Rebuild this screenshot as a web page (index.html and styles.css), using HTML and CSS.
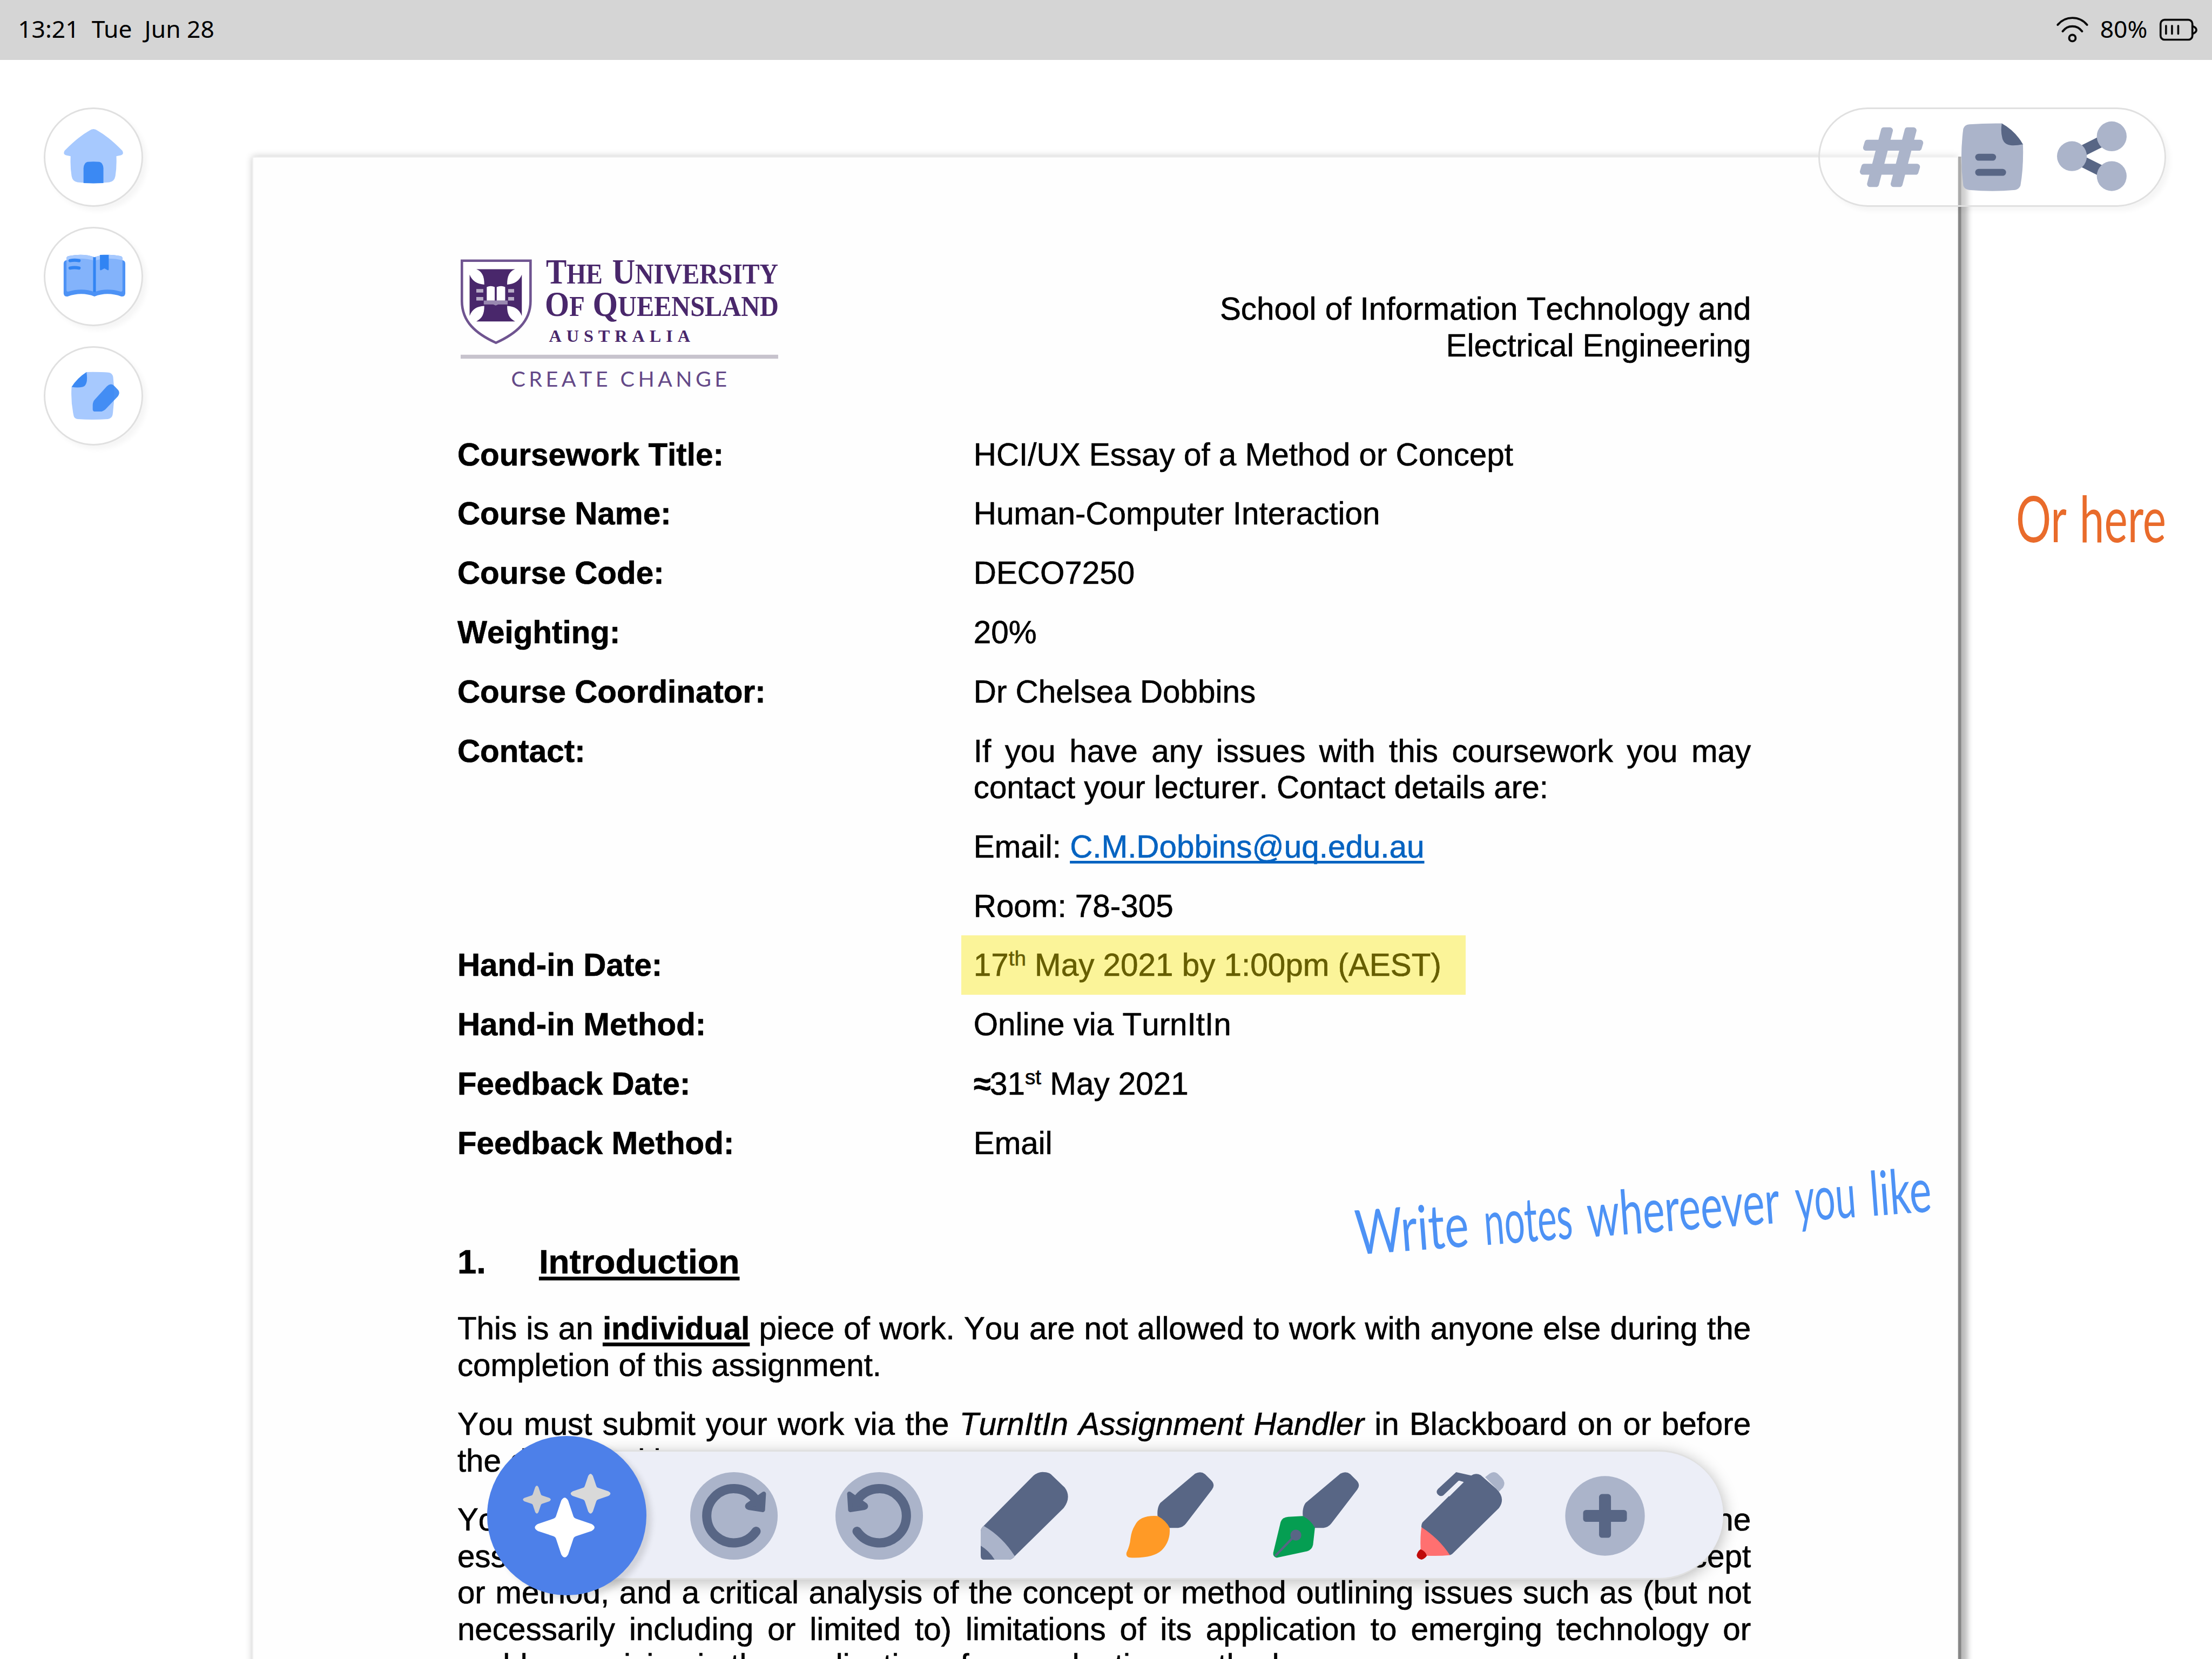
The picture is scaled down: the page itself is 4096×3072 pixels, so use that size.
FILE: index.html
```html
<!DOCTYPE html>
<html lang="en">
<head>
<meta charset="utf-8">
<title>Coursework reader</title>
<link rel="stylesheet" href="styles.css">
</head>
<body>
<header class="status">
  <span class="status-text">13:21&nbsp; Tue&nbsp; Jun 28</span>
  <div class="status-right">
    <svg class="wifi" viewBox="4136 32 64 56" fill="none" stroke="#0a0a0a" stroke-width="4.2" stroke-linecap="round"><path d="M4138.500 50.500Q4150 36.500 4168 36.500T4197.500 50.500M4148.500 63.500Q4156 53.500 4168 53.500T4187.500 63.500"/><circle cx="4168" cy="77" r="6.500"/></svg>
    <span class="status-text">80%</span>
    <svg class="battery" viewBox="4342 36 78 48" fill="none" stroke="#0a0a0a" stroke-width="4" stroke-linecap="round"><rect x="4345" y="40" width="64" height="40" rx="8"/><path d="M4356 52v16M4368 52v16M4380.500 52v16M4410 53Q4417 56 4417 60.500T4410 68"/></svg>
  </div>
</header>
<main class="stage">
  <article class="sheet">
    <div class="masthead">
      <svg class="crest" viewBox="919 510 660 280">
        <g fill="#49276b">
          <path d="M928 525H1066V606C1066 648 1036 672 996.500 690C957 672 928 648 928 606Z" fill="#fff" stroke="#6f5490" stroke-width="5"/>
          <path d="M957 542H1035C1022 547 1019 558 1019 573C1034 572 1043 566 1048.500 553V636C1043 622 1034 617 1019 616C1019 632 1023 641 1035 647H957C969 641 973 632 973 616C958 617 949 622 943.500 636V553C949 566 958 572 973 573C973 558 970 547 957 542Z"/>
          <path d="M957 582h14v7h-14zM957 598h14v7h-14zM1021 582h12v7h-12zM1021 598h12v7h-12z" fill="#b9adc8"/>
          <path d="M972 605H1020V613H1001L996 615L991 613H972Z" fill="#9a89b0"/>
          <path d="M978 578Q986 574 994 578V605H978ZM998 578Q1007 574 1015 578V605H998Z" fill="#fff"/>
          <g class="serif">
            <text x="1097" y="571" font-size="72" textLength="114" lengthAdjust="spacingAndGlyphs">T<tspan font-size="58">HE</tspan></text>
            <text x="1230" y="571" font-size="72" textLength="334" lengthAdjust="spacingAndGlyphs">U<tspan font-size="58">NIVERSITY</tspan></text>
            <text x="1095" y="636.500" font-size="72" textLength="80" lengthAdjust="spacingAndGlyphs">O<tspan font-size="58">F</tspan></text>
            <text x="1191" y="636.500" font-size="72" textLength="374" lengthAdjust="spacingAndGlyphs">Q<tspan font-size="58">UEENSLAND</tspan></text>
            <text x="1103" y="688" font-size="35" textLength="284">AUSTRALIA</text>
          </g>
          <rect x="925.500" y="714" width="638.500" height="8" fill="#c7c3cd"/>
          <text class="motto" x="1027" y="778" font-size="43" textLength="434">CREATE CHANGE</text>
        </g>
      </svg>
      <p class="school">School of Information Technology and<br>Electrical Engineering</p>
    </div>
    <dl class="facts">
      <dt>Coursework Title:</dt><dd>HCI/UX Essay of a Method or Concept</dd>
      <dt>Course Name:</dt><dd>Human-Computer Interaction</dd>
      <dt>Course Code:</dt><dd>DECO7250</dd>
      <dt>Weighting:</dt><dd>20%</dd>
      <dt>Course Coordinator:</dt><dd>Dr Chelsea Dobbins</dd>
      <dt>Contact:</dt>
      <dd class="stack">
        <p><span class="line">If you have any issues with this coursework you may</span><span class="line end">contact your lecturer. Contact details are:</span></p>
        <p>Email: <a class="mail">C.M.Dobbins@uq.edu.au</a></p>
        <p>Room: 78-305</p>
      </dd>
      <dt>Hand-in Date:</dt><dd class="marked">17<sup>th</sup> May 2021 by 1:00pm (AEST)</dd>
      <dt>Hand-in Method:</dt><dd>Online via TurnItIn</dd>
      <dt>Feedback Date:</dt><dd><span class="approx">≈</span>31<sup>st</sup> May 2021</dd>
      <dt>Feedback Method:</dt><dd>Email</dd>
    </dl>
    <h2 class="heading"><span>1.</span><u>Introduction</u></h2>
    <div class="prose">
      <p><span class="line">This is an <b><u>individual</u></b> piece of work. You are not allowed to work with anyone else during the</span><span class="line end">completion of this assignment.</span></p>
      <p><span class="line">You must submit your work via the <i>TurnItIn Assignment Handler</i> in Blackboard on or before</span><span class="line end">the deadline itinerary.</span></p>
      <p><span class="line">You are required to select a method or concept from the course and write about it in the</span><span class="line">essay. The essay should contain a summary of the background of the chosen concept</span><span class="line">or method, and a critical analysis of the concept or method outlining issues such as (but not</span><span class="line">necessarily including or limited to) limitations of its application to emerging technology or</span><span class="line end">problems arising in the application of an evaluation method.</span></p>
    </div>
  </article>

  <svg class="ink ink-blue" viewBox="2700 2300 1220 260">
    <g transform="translate(2729 2523) rotate(-4.300)" font-size="124">
      <text x="0" textLength="228" lengthAdjust="spacingAndGlyphs">Write</text>
      <text x="259" textLength="178" lengthAdjust="spacingAndGlyphs">notes</text>
      <text x="467" textLength="388" lengthAdjust="spacingAndGlyphs">whereever</text>
      <text x="887" textLength="122" lengthAdjust="spacingAndGlyphs">you</text>
      <text x="1037" textLength="124" lengthAdjust="spacingAndGlyphs">like</text>
    </g>
  </svg>
  <svg class="ink ink-orange" viewBox="4040 960 340 160">
    <g font-size="128">
      <text x="4054" y="1090" textLength="102" lengthAdjust="spacingAndGlyphs">Or</text>
      <text x="4182" y="1090" textLength="174" lengthAdjust="spacingAndGlyphs">here</text>
    </g>
  </svg>

  <nav class="side">
    <a class="round"><svg viewBox="0 0 200 200"><path fill="#a7c9fe" d="M100 43.500Q104 43.500 109 47Q132 60 158 87Q162 94 155 96L146 98Q147 120 144 138Q142 149 132 150.500Q100 154 68 150.500Q58 149 56 138Q53 120 54 98L45 96Q38 94 42 87Q68 60 91 47Q96 43.500 100 43.500Z"/><path fill="#3b89f3" d="M80 152V122Q81 111 88 109.500Q100 108 112 109.500Q119 111 120 122V152Q100 153 80 152Z"/></svg></a>
    <a class="round"><svg viewBox="0 0 200 200"><path fill="#4d92f5" d="M40 74Q40 68 46 67V67Q76 60 102 68Q128 60 158 67Q164 68 164 74V134Q163 141 156 140Q128 130 102 140Q76 130 48 140Q41 141 40 134Z"/><path fill="#83b3fb" d="M45.700 63Q46 59 52 58.500Q80 53 102 61Q124 53 152 58.500Q158 59 158.300 63V127Q158 131 154 130Q126 122 102 131Q78 122 50 130Q46 131 45.700 127Z"/><path fill="#a7c9fe" d="M45.700 63Q46 59 52 58.500Q80 53 102 61Q124 53 152 58.500Q158 59 158.300 63V67Q128 60 102 68Q76 60 45.700 67Z"/><path fill="#3184f3" d="M99.300 61h5.500v70h-5.500zM113 56.500Q122 56 130.700 56.500V86Q130 88 128 87L122 83.500L116 87Q114 88 113 86Z"/><path fill="none" stroke="#3184f3" stroke-width="6.500" stroke-linecap="round" d="M53 68Q62 66 71 68M53 83Q62 81 71 83"/></svg></a>
    <a class="round"><svg viewBox="0 0 200 200"><path fill="#a7c9fe" d="M86 52Q112 51.500 130 53Q138 54 139.500 62Q144 98 138.500 138Q137 145.500 129 146.500Q98 149 68 146.500Q61 145.500 60 139Q54 110 56 82Z"/><path fill="#3b89f3" d="M86 52Q90 79 78 82Q68 84 56 82Q67 64 86 52Z"/><path fill="#3b89f3" fill-opacity=".93" d="M127 80.500Q135 73 142 80L150 88.500Q154 94 149 101L124 127Q119 131.500 114 131.500H103Q98.500 131.500 98.500 127V118Q99 111 103 107Z"/></svg></a>
  </nav>

  <div class="pill">
    <svg viewBox="0 0 700 200">
      <g fill="#abb4ca" stroke="#abb4ca" stroke-width="12" stroke-linejoin="round"><path d="M132 46h12l-28 108h-12zM179.500 46h12l-28 108h-12zM99 71h106l-3 10h-106zM92.500 119.300h106l-3 10h-106z"/></g>
      <path fill="#abb4ca" d="M303.500 34Q335 31.500 369 32L411.500 74Q413 120 406.500 157Q404 164 396 166Q350 170 303 166Q293 164 291.500 157Q284 100 291.500 43Q294 35 303.500 34Z"/>
      <path fill="#586685" d="M369 32Q396 47 411.500 74Q397 77 387 76Q375 75 371 65Q366 50 369 32Z"/>
      <rect fill="#586685" x="315.500" y="93" width="42" height="14" rx="7"/><rect fill="#586685" x="315.500" y="123.500" width="62" height="14" rx="7"/>
      <path stroke="#586685" stroke-width="22" fill="none" d="M590 58L510 98L590 138"/>
      <g fill="#abb4ca"><circle cx="510" cy="98" r="30"/><circle cx="590" cy="58" r="30"/><circle cx="590" cy="138" r="30"/></g>
    </svg>
  </div>

  <div class="tools">
    <div class="magic"><svg viewBox="0 0 320 320"><defs><path id="star" d="M-7-54Q0-66 7-54L17-24Q18-19 23-17.500L54-7Q66 0 54 7L23 17.500Q18 19 17 24L7 54Q0 66-7 54L-17 24Q-18 19-23 17.500L-54 7Q-66 0-54-7L-23-17.500Q-18-19-17-24Z"/></defs><use href="#star" fill="#cfcfcf" transform="translate(100 128) scale(.467)"/><use href="#star" fill="#d9d9d9" transform="translate(208 116) scale(.667)"/><use href="#star" fill="#fff" transform="translate(156 184)"/></svg></div>
    <div class="tray">
      <svg class="tool" viewBox="0 0 176 176"><g id="turn"><circle cx="88" cy="88" r="88" fill="#abb4ca"/><path fill="none" stroke="#586685" stroke-width="18.500" stroke-linecap="round" d="M132.500 119A54.500 54.500 0 1 1 129 52"/><path fill="#586685" stroke="#586685" stroke-width="9" stroke-linejoin="round" d="M148 43.500L146 76L118 71.500Q113 70 116 66Z"/></g></svg>
      <svg class="tool" viewBox="0 0 176 176"><use href="#turn" transform="translate(176 0) scale(-1 1)"/></svg>
      <svg class="tool" viewBox="0 0 176 176"><path fill="#586685" d="M106 7Q117-2 128 0Q135 0 141 4L169 31Q183 50 167 72L68.500 169Q64 175.500 58 176H5Q0 175 0 168V118Q1 112 6 108Z"/><path fill="#abb4ca" d="M6 108Q44 130 68.500 169Q64 175.500 58 176H28Q17 158 0 148V118Q1 112 6 108Z"/></svg>
      <svg class="tool" viewBox="0 0 176 176"><path id="handle" fill="#586685" d="M139 3Q150-3 159 4L172 17Q180 26 173 35L121 103Q115 111 105 112H87.500L63.500 88Q62 72 69 62Z"/><path fill="#ff9a26" d="M63.700 88.300Q28 86 18 107Q11 118 9 134Q8 147 1 162Q-1 172 12 172Q55 173 72 157Q90 138 87.800 112Q80 97 63.700 88.300Z"/></svg>
      <svg class="tool" viewBox="0 0 176 176"><use href="#handle"/><path fill="#059e52" d="M63.700 88.300L34 90Q22 91 19 100L4 162Q3 170 11 172L72 159Q82 156 84 146L87.800 112Q80 97 63.700 88.300Z"/><circle cx="49.500" cy="126.700" r="11" fill="#586685"/><path stroke="#586685" stroke-width="4.500" d="M48 127L8 168.500"/></svg>
      <svg class="tool" viewBox="0 0 176 176"><path fill="#abb4ca" d="M138 10L147 3Q156-3 163 3L172 12Q180 21 174 31L166 39Z"/><path fill="#586685" d="M110 6.700Q119 1 129 6L160 33Q180 52 166 72L73.500 163Q71 166 67 167L10 111Q9 106 12 101L94 19.500L84.500 17.500L53.800 46.700Q48 50 43 45Q38 40 43 34L79.700 0Z"/><path fill="#eceef7" d="M86 17L95 20L66 49L61 42Z"/><path fill="#ff7070" d="M10 110.700Q46 134 67.200 167Q45 169 20.800 168L8.300 155Q7 130 10 110.700Z"/><path fill="#c00a0a" d="M8.300 155Q18 159 20.800 168Q17 174 10 176Q1 174 .300 167Q2 159 8.300 155Z"/></svg>
      <svg class="tool" viewBox="0 0 176 176"><circle cx="88" cy="88" r="80" fill="#abb4ca"/><path fill="none" stroke="#586685" stroke-width="12" stroke-linejoin="round" d="M82 50h12v76h-12zM50 82h76v12h-76z"/><path stroke="#586685" stroke-width="12" d="M88 50v76M50 88h76"/></svg>
    </div>
  </div>
</main>
</body>
</html>
```
FILE: styles.css
```css
/* 1rem stands for 100 design units of the 4448-unit wide canvas */
html { font-size: 92.086px; }
* { box-sizing: border-box; }
body { margin: 0; width: 44.48rem; height: 33.36rem; overflow: hidden; background: #fff; color: #000; display: flex; flex-direction: column; }
svg { display: block; overflow: visible; }
p, dl, dd, h2 { margin: 0; }

.status { flex: none; height: 1.2rem; padding: 0 .28rem 0 .36rem; background: #d5d5d5; display: flex; align-items: center; justify-content: space-between; font-family: "Noto Sans", sans-serif; font-size: .482rem; line-height: 1.2rem; }
.status-text { margin-top: -.04rem; }
.status-right { display: flex; align-items: center; gap: .24rem; }
.wifi { width: .64rem; height: .56rem; }
.battery { width: .78rem; height: .48rem; }

.stage { position: relative; flex: 1; overflow: hidden; padding: 1.95rem 0 0 5.07rem; }

.sheet { width: 34.31rem; height: 34rem; padding: 1.925rem 4.15rem 0 4.105rem; background: #fefefe; font-family: "Liberation Sans", Arial, sans-serif; font-size: .634rem; line-height: .733rem; font-kerning: none; -webkit-text-stroke: .007rem currentColor; border: .03rem solid #f0f0f0; box-shadow: .06rem 0 0 #868686, .2rem .12rem .1rem rgba(0,0,0,.25), 0 0 .14rem rgba(0,0,0,.22); }
.masthead { display: flex; justify-content: space-between; height: 3.675rem; }
.crest { width: 6.6rem; height: 2.8rem; -webkit-text-stroke: 0; }
.serif { font-family: "Liberation Serif", serif; font-weight: 700; }
.motto { font-family: Lato, sans-serif; fill: #644988; }
.school { padding-top: .75rem; text-align: right; }

.facts { display: grid; grid-template-columns: 10.38rem 1fr; row-gap: .459rem; }
.facts dt { font-weight: 700; }
.stack { display: flex; flex-direction: column; gap: .459rem; }
.line { display: block; white-space: nowrap; text-align: justify; text-align-last: justify; }
.line.end { text-align-last: left; }
.mail { color: #0563c1; text-decoration: underline; text-decoration-thickness: .05rem; text-underline-offset: .06rem; text-decoration-skip-ink: none; }
.approx { display: inline-block; width: .33rem; font-weight: 700; }
sup { font-size: .42rem; line-height: 0; vertical-align: .21rem; }
.marked { justify-self: start; margin: -.23rem 0 -.23rem -.25rem; padding: .23rem .49rem .23rem .25rem; background: #fbf499; color: #665e00; }

.heading { margin-top: 1.63rem; display: flex; font-size: .692rem; line-height: .796rem; }
.heading span { width: 1.64rem; }
u { text-decoration-thickness: .08rem; text-underline-offset: .06rem; text-decoration-skip-ink: none; }
.prose { margin-top: .574rem; display: flex; flex-direction: column; gap: .455rem; }

.ink { position: absolute; font-family: Lato, sans-serif; }
.ink-blue { left: 27rem; top: 21.8rem; width: 12.2rem; height: 2.6rem; fill: #4d92f5; }
.ink-orange { left: 40.4rem; top: 8.4rem; width: 3.4rem; height: 1.6rem; fill: #e96b2b; }

.side { position: absolute; left: .88rem; top: .96rem; display: flex; flex-direction: column; gap: .4rem; }
.round, .pill { border: .04rem solid #e0e0e0; border-radius: 1rem; box-shadow: .08rem .08rem .1rem rgba(0,0,0,.04); }
.round { width: 2rem; height: 2rem; background: #fff; }
.round svg, .pill svg { margin: -.03rem; height: 2rem; }
.round svg { width: 2rem; }
.pill { position: absolute; right: .92rem; top: .96rem; width: 7rem; height: 2rem; background: rgba(255,255,255,.3); }
.pill svg { width: 7rem; }

.tools { position: absolute; left: 9.8rem; top: 27.68rem; display: flex; align-items: center; }
.magic { position: relative; flex: none; width: 3.2rem; height: 3.2rem; border-radius: 50%; background: #4d80e9; box-shadow: .1rem .08rem .12rem rgba(0,0,0,.12); }
.tray { margin: 0 0 .04rem -2rem; height: 2.6rem; padding: .04rem 1.49rem 0 2.88rem; display: flex; align-items: center; gap: 1.16rem; background: #eceef7; border: .04rem solid #e0e0e0; border-width: .04rem 0; border-radius: 1.3rem; box-shadow: .03rem .06rem .3rem rgba(0,0,0,.26); }
.tool { flex: none; width: 1.76rem; height: 1.76rem; }
```
